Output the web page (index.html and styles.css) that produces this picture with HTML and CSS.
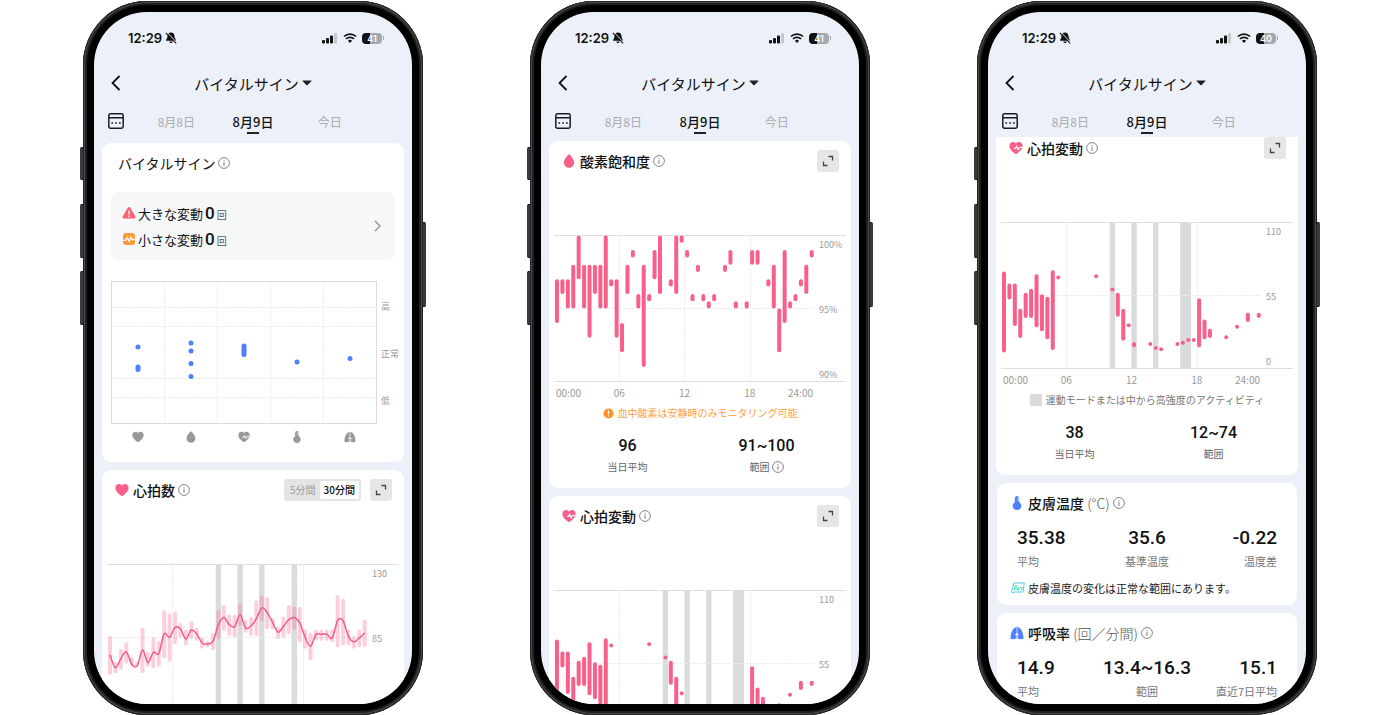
FILE: index.html
```
<!DOCTYPE html>
<html lang="ja">
<head>
    <meta charset="UTF-8">
    <meta name="viewport" content="width=device-width, initial-scale=1.0">
    <title>バイタルサイン</title>
    <link rel="stylesheet" href="styles.css">
</head>
<body>
    <svg class="sprite" aria-hidden="true">
        <symbol id="bell-off" viewBox="0 0 12 12">
            <path d="M6 .5c-2.200 0-3.500 1.600-3.500 3.600 0 2.600-1.500 3.200-1.500 4.700h10c0-1.500-1.500-2.100-1.500-4.700C9.500 2.100 8.200.5 6 .5zM4.300 9.500c.2 1 .9 1.600 1.700 1.600s1.500-.6 1.700-1.600z" fill="#111"/>
            <path d="M1.900.2l10 10.600" stroke="#ecf1f9" stroke-width="1"/>
            <path d="M.8.8l10.400 10.600" stroke="#111" stroke-width="1.100"/>
        </symbol>
        <symbol id="signal" viewBox="0 0 16 11">
            <rect x="0" y="7" width="3" height="3.500" rx="1" fill="#111"/>
            <rect x="4" y="5" width="3" height="5.500" rx="1" fill="#111"/>
            <rect x="8" y="2.500" width="3" height="8" rx="1" fill="#111"/>
            <rect x="12" y="0" width="3" height="10.500" rx="1" fill="#c3c7ce"/>
        </symbol>
        <symbol id="wifi" viewBox="0 0 14 10">
            <path d="M.9 3.500a8.800 8.800 0 0 1 12.200 0M3 5.900a5.800 5.800 0 0 1 8 0" fill="none" stroke="#111" stroke-width="1.700"/>
            <path d="M7 9.900L4.900 7.700a3 3 0 0 1 4.200 0z" fill="#111"/>
        </symbol>
        <symbol id="back" viewBox="0 0 10 16">
            <path d="M8.500 1L1.500 8l7 7" fill="none" stroke="#111" stroke-width="1.800"/>
        </symbol>
        <symbol id="caret" viewBox="0 0 10 6">
            <path d="M1 .5h8c.5 0 .6.4.3.7L5.600 5c-.4.400-.8.400-1.200 0L.7 1.200C.4.900.5.500 1 .5z" fill="#222"/>
        </symbol>
        <symbol id="calendar" viewBox="0 0 16 16">
            <path d="M2.500.8h11c1 0 1.700.7 1.700 1.700v11c0 1-.7 1.700-1.700 1.700h-11c-1 0-1.700-.7-1.700-1.700v-11c0-1 .7-1.700 1.700-1.700zM1 4.800h14" fill="none" stroke="#1c1c1e" stroke-width="1.500"/>
            <path d="M3.400 9.200h1.700v1.600H3.400zM7.200 9.200h1.700v1.600H7.200zM11 9.200h1.700v1.600H11z" fill="#1c1c1e"/>
        </symbol>
        <symbol id="info" viewBox="0 0 12 12">
            <circle cx="6" cy="6" r="5.400" fill="none" stroke="#777" stroke-width=".9"/>
            <path d="M6 5.200v3.600M6 3.200v1.100" stroke="#777" stroke-width="1"/>
        </symbol>
        <symbol id="expand" viewBox="0 0 12 12">
            <path d="M6.500 1.500h4v4M5.500 10.500h-4v-4" fill="none" stroke="#444" stroke-width="1.300"/>
        </symbol>
        <symbol id="chevron" viewBox="0 0 7 12">
            <path d="M1 1l5 5-5 5" fill="none" stroke="#8e8e93" stroke-width="1.300"/>
        </symbol>
        <symbol id="warning" viewBox="0 0 14 14">
            <path d="M5.700 1.700c.6-1 2-1 2.600 0l5 8.800c.6 1-.1 2-1.200 2H1.900c-1.100 0-1.800-1-1.200-2z" fill="#ff5f74"/>
            <path d="M7 4.500v3.800M7 9.500v1.500" stroke="#fff" stroke-width="1.400"/>
        </symbol>
        <symbol id="pulse" viewBox="0 0 14 14">
            <rect x="1" y="1" width="12" height="12" rx="3" fill="#ff9a3c"/>
            <path d="M1.500 8.300h2l1.700-2.600 2 3.500L9 5.200l1.200 2.300h2.500" fill="none" stroke="#fff" stroke-width="1.300"/>
        </symbol>
        <symbol id="alert" viewBox="0 0 12 12">
            <circle cx="6" cy="6" r="5.500" fill="#ff9228"/>
            <path d="M6 2.700v4M6 7.800v1.500" stroke="#fff" stroke-width="1.400"/>
        </symbol>
        <symbol id="heart" viewBox="0 0 14 14">
            <path d="M7 13.200C4.300 11.300.4 8.700.4 4.700.4 2.500 2 .9 4 .9c1.300 0 2.400.6 3 1.600C7.600 1.500 8.700.9 10 .9c2 0 3.600 1.600 3.600 3.800 0 4-3.900 6.600-6.600 8.500z" fill="currentColor"/>
        </symbol>
        <symbol id="heart-pulse" viewBox="0 0 14 14">
            <path d="M7 13.200C4.300 11.300.4 8.700.4 4.700.4 2.500 2 .9 4 .9c1.300 0 2.400.6 3 1.600C7.600 1.500 8.700.9 10 .9c2 0 3.600 1.600 3.600 3.800 0 4-3.900 6.600-6.600 8.500z" fill="currentColor"/>
            <path d="M5 7.400h1.500l1.100-2.200 1.500 3.500 1.300-2.200h3.300" fill="none" stroke="#fff" stroke-width="1.100"/>
        </symbol>
        <symbol id="drop" viewBox="0 0 14 14">
            <path d="M7 .3c.6 0 5.200 5 5.200 8.200A5.200 5.200 0 0 1 7 13.700a5.200 5.200 0 0 1-5.200-5.200C1.800 5.300 6.400.3 7 .3z" fill="currentColor"/>
        </symbol>
        <symbol id="thermo" viewBox="0 0 14 14">
            <path d="M7 0c1.300 0 2.200 1 2.200 2.200v4A4.100 4.100 0 0 1 7 13.900a4.100 4.100 0 0 1-2.200-7.700v-4C4.800 1 5.700 0 7 0z" fill="currentColor"/>
            <path d="M7.300 2h1.900M7.300 4.200h1.900" stroke="#fff" stroke-width="1"/>
        </symbol>
        <symbol id="lungs" viewBox="0 0 14 14">
            <path d="M6.500 1.200v6L5.300 8.500v1l1.200-.8v3.600c-1.400.9-3.500 1-5.100.7-.6-.1-.9-.4-.9-1C.5 8 2.500 1.200 6.500 1.200zM7.500 1.200v6l1.200 1.300v1l-1.200-.8v3.600c1.400.9 3.500 1 5.100.7.6-.1.900-.4.9-1 0-4-2-10.800-6-10.800z" fill="currentColor"/>
            <path d="M7 .4v7" stroke="currentColor" stroke-width=".6"/>
        </symbol>
        <symbol id="note" viewBox="0 0 14 12">
            <path d="M2.800 1h10.500l-1.300 9H3l-1.500 1.300L.8 9.500z" fill="none" stroke="#4fcbe6" stroke-width="1"/>
            <path d="M3.500 8l.7-4.300c2.300-.4 2.300 1.700.2 2.200l1.800 1.900c2.300-.3 2.200-2.500.7-1.900-1.200.8 0 2.700 1.800 1.700M9 5.500h2.200L10.500 8" fill="none" stroke="#3fd9ac" stroke-width="1"/>
        </symbol>
    </svg>

    <main class="phones">
        <section class="phone" aria-label="バイタルサイン">
            <i class="key key-action"></i><i class="key key-up"></i><i class="key key-down"></i><i class="key key-power"></i>
            <div class="screen">
                <div class="status">
                    <span class="time">12:29</span>
                    <svg class="icon-bell"><use href="#bell-off"/></svg>
                    <svg class="icon-signal"><use href="#signal"/></svg>
                    <svg class="icon-wifi"><use href="#wifi"/></svg>
                    <span class="battery">41</span>
                </div>
                <header class="topbar">
                    <button class="plain" aria-label="戻る"><svg class="icon-back"><use href="#back"/></svg></button>
                    <button class="plain page-title">バイタルサイン<svg class="icon-caret"><use href="#caret"/></svg></button>
                </header>
                <nav class="days">
                    <button class="plain" aria-label="カレンダー"><svg class="icon-calendar"><use href="#calendar"/></svg></button>
                    <button class="plain day">8月8日</button>
                    <button class="plain day active">8月9日</button>
                    <button class="plain day">今日</button>
                </nav>
                <div class="feed feed-top">
                    <article class="card">
                        <div class="card-head no-icon">
                            <h2>バイタルサイン</h2>
                            <svg class="icon-info"><use href="#info"/></svg>
                        </div>
                        <a class="summary" href="#vitals">
                            <span class="summary-rows">
                                <span class="summary-row"><svg class="icon"><use href="#warning"/></svg>大きな変動 <b>0</b><small>回</small></span>
                                <span class="summary-row"><svg class="icon"><use href="#pulse"/></svg>小さな変動 <b>0</b><small>回</small></span>
                            </span>
                            <svg class="icon-chevron"><use href="#chevron"/></svg>
                        </a>
                        <div class="vitals" id="vitals">
                            <svg class="vitals-plot" viewBox="0 0 266 143">
                                <g class="grid">
                                    <path d="M0 26.500h266M0 45.500h266M0 97.500h266M0 116.500h266"/>
                                    <path d="M53.500 0v143M106.500 0v143M159.500 0v143M212.500 0v143"/>
                                </g>
                                <rect class="frame" x=".5" y=".5" width="265" height="142"/>
                                <g class="marks">
                                    <path d="M27 66v0M27 86v2.500"/>
                                    <path d="M80 62v0M80 70v0M80 82.500v0M80 95.500v0"/>
                                    <path d="M133 65v8.500"/>
                                    <path d="M186 81v0"/>
                                    <path d="M239 77.500v0"/>
                                </g>
                            </svg>
                            <div class="vitals-levels"><span>高</span><span>正常</span><span>低</span></div>
                            <div class="vitals-icons">
                                <svg><use href="#heart"/></svg>
                                <svg><use href="#drop"/></svg>
                                <svg><use href="#heart-pulse"/></svg>
                                <svg><use href="#thermo"/></svg>
                                <svg><use href="#lungs"/></svg>
                            </div>
                        </div>
                    </article>
                    <article class="card">
                        <div class="card-head">
                            <svg class="icon pink"><use href="#heart"/></svg>
                            <h2>心拍数</h2>
                            <svg class="icon-info"><use href="#info"/></svg>
                            <div class="segmented">
                                <button>5分間</button>
                                <button class="selected">30分間</button>
                            </div>
                            <button class="expand" aria-label="拡大"><svg><use href="#expand"/></svg></button>
                        </div>
                        <div class="chart">
                            <svg class="plot" data-chart="heartRate" viewBox="0 0 292 147"></svg>
                            <div class="y-axis"><span>130</span><span>85</span><span></span></div>
                        </div>
                    </article>
                </div>
            </div>
        </section>

        <section class="phone" aria-label="酸素飽和度">
            <i class="key key-action"></i><i class="key key-up"></i><i class="key key-down"></i><i class="key key-power"></i>
            <div class="screen">
                <div class="status">
                    <span class="time">12:29</span>
                    <svg class="icon-bell"><use href="#bell-off"/></svg>
                    <svg class="icon-signal"><use href="#signal"/></svg>
                    <svg class="icon-wifi"><use href="#wifi"/></svg>
                    <span class="battery">41</span>
                </div>
                <header class="topbar">
                    <button class="plain" aria-label="戻る"><svg class="icon-back"><use href="#back"/></svg></button>
                    <button class="plain page-title">バイタルサイン<svg class="icon-caret"><use href="#caret"/></svg></button>
                </header>
                <nav class="days">
                    <button class="plain" aria-label="カレンダー"><svg class="icon-calendar"><use href="#calendar"/></svg></button>
                    <button class="plain day">8月8日</button>
                    <button class="plain day active">8月9日</button>
                    <button class="plain day">今日</button>
                </nav>
                <div class="feed feed-middle">
                    <article class="card">
                        <div class="card-head">
                            <svg class="icon pink"><use href="#drop"/></svg>
                            <h2>酸素飽和度</h2>
                            <svg class="icon-info"><use href="#info"/></svg>
                            <button class="expand" aria-label="拡大"><svg><use href="#expand"/></svg></button>
                        </div>
                        <div class="chart">
                            <svg class="plot" data-chart="oxygen" viewBox="0 0 292 147"></svg>
                            <div class="y-axis"><span>100%</span><span>95%</span><span>90%</span></div>
                            <div class="x-axis"><span>00:00</span><span>06</span><span>12</span><span>18</span><span>24:00</span></div>
                        </div>
                        <p class="note note-warn"><svg class="icon-alert"><use href="#alert"/></svg>血中酸素は安静時のみモニタリング可能</p>
                        <dl class="pair">
                            <div><dd>96</dd><dt>当日平均</dt></div>
                            <div><dd>91~100</dd><dt>範囲<svg class="icon-info"><use href="#info"/></svg></dt></div>
                        </dl>
                    </article>
                    <article class="card">
                        <div class="card-head">
                            <svg class="icon pink"><use href="#heart-pulse"/></svg>
                            <h2>心拍変動</h2>
                            <svg class="icon-info"><use href="#info"/></svg>
                            <button class="expand" aria-label="拡大"><svg><use href="#expand"/></svg></button>
                        </div>
                        <div class="chart">
                            <svg class="plot" data-chart="hrv" viewBox="0 0 292 147"></svg>
                            <div class="y-axis"><span>110</span><span>55</span><span></span></div>
                        </div>
                    </article>
                </div>
            </div>
        </section>

        <section class="phone" aria-label="心拍変動">
            <i class="key key-action"></i><i class="key key-up"></i><i class="key key-down"></i><i class="key key-power"></i>
            <div class="screen">
                <div class="status">
                    <span class="time">12:29</span>
                    <svg class="icon-bell"><use href="#bell-off"/></svg>
                    <svg class="icon-signal"><use href="#signal"/></svg>
                    <svg class="icon-wifi"><use href="#wifi"/></svg>
                    <span class="battery">40</span>
                </div>
                <header class="topbar">
                    <button class="plain" aria-label="戻る"><svg class="icon-back"><use href="#back"/></svg></button>
                    <button class="plain page-title">バイタルサイン<svg class="icon-caret"><use href="#caret"/></svg></button>
                </header>
                <nav class="days">
                    <button class="plain" aria-label="カレンダー"><svg class="icon-calendar"><use href="#calendar"/></svg></button>
                    <button class="plain day">8月8日</button>
                    <button class="plain day active">8月9日</button>
                    <button class="plain day">今日</button>
                </nav>
                <div class="feed feed-bottom">
                    <article class="card">
                        <div class="card-head">
                            <svg class="icon pink"><use href="#heart-pulse"/></svg>
                            <h2>心拍変動</h2>
                            <svg class="icon-info"><use href="#info"/></svg>
                            <button class="expand" aria-label="拡大"><svg><use href="#expand"/></svg></button>
                        </div>
                        <div class="chart">
                            <svg class="plot" data-chart="hrv" viewBox="0 0 292 147"></svg>
                            <div class="y-axis"><span>110</span><span>55</span><span>0</span></div>
                            <div class="x-axis"><span>00:00</span><span>06</span><span>12</span><span>18</span><span>24:00</span></div>
                        </div>
                        <p class="note"><i class="swatch"></i>運動モードまたは中から高強度のアクティビティ</p>
                        <dl class="pair">
                            <div><dd>38</dd><dt>当日平均</dt></div>
                            <div><dd>12~74</dd><dt>範囲</dt></div>
                        </dl>
                    </article>
                    <article class="card card-compact">
                        <div class="card-head">
                            <svg class="icon blue"><use href="#thermo"/></svg>
                            <h2>皮膚温度 <small>(°C)</small></h2>
                            <svg class="icon-info"><use href="#info"/></svg>
                        </div>
                        <dl class="triple">
                            <div><dd>35.38</dd><dt>平均</dt></div>
                            <div><dd>35.6</dd><dt>基準温度</dt></div>
                            <div><dd>-0.22</dd><dt>温度差</dt></div>
                        </dl>
                        <p class="advice"><svg class="icon-note"><use href="#note"/></svg>皮膚温度の変化は正常な範囲にあります。</p>
                    </article>
                    <article class="card card-compact">
                        <div class="card-head">
                            <svg class="icon blue"><use href="#lungs"/></svg>
                            <h2>呼吸率 <small>(回／分間)</small></h2>
                            <svg class="icon-info"><use href="#info"/></svg>
                        </div>
                        <dl class="triple">
                            <div><dd>14.9</dd><dt>平均</dt></div>
                            <div><dd>13.4~16.3</dd><dt>範囲</dt></div>
                            <div><dd>15.1</dd><dt>直近7日平均</dt></div>
                        </dl>
                    </article>
                </div>
            </div>
        </section>
    </main>
    <script src="charts.js"></script>
</body>
</html>
```

FILE: styles.css
```
* {
    box-sizing: border-box;
}

body {
    margin: 0;
    background-color: #fff;
    color: #111;
    font-family: "Noto Sans CJK JP", "Noto Sans", sans-serif;
}

h2, p, dl, dd, dt {
    margin: 0;
}

button {
    font-family: inherit;
    color: inherit;
    cursor: pointer;
}

svg {
    display: block;
    flex-shrink: 0;
}

.sprite {
    display: none;
}

.phones {
    display: flex;
    justify-content: center;
    gap: 107px;
    padding-top: 1px;
}

/* device frame */
.phone {
    position: relative;
    flex: 0 1 340px;
    aspect-ratio: 340 / 714;
    padding: 11px;
    border-radius: 64px;
    background-color: #000;
    box-shadow: inset 0 0 0 1px #222423, inset 0 0 0 2px #4a4c4c, inset 0 0 0 4px #1f2120;
}

.key {
    position: absolute;
    left: -3px;
    width: 3px;
    border-radius: 2px 0 0 2px;
    background-color: #3a3c3b;
    border-top: 1px solid #111;
    border-bottom: 1px solid #111;
}

.key-action {
    top: 146px;
    height: 33px;
}

.key-up {
    top: 203px;
    height: 54px;
}

.key-down {
    top: 270px;
    height: 54px;
}

.key-power {
    left: auto;
    right: -3px;
    top: 221px;
    height: 85px;
    border-radius: 0 2px 2px 0;
}

.screen {
    display: flex;
    flex-direction: column;
    height: 100%;
    border-radius: 53px;
    overflow: hidden;
    background-color: #ecf1f9;
}

/* status bar and header */
.status {
    display: flex;
    align-items: center;
    flex: 0 0 52px;
    padding: 0 30px 0 34px;
}

.time {
    font-family: Inter, sans-serif;
    font-size: 13px;
    font-weight: 600;
}

.icon-bell {
    width: 12px;
    height: 12px;
    margin-left: 3px;
}

.icon-signal {
    width: 16px;
    height: 11px;
    margin-left: auto;
}

.icon-wifi {
    width: 14px;
    height: 10px;
    margin: 0 5px;
}

.battery {
    display: flex;
    align-items: center;
    justify-content: center;
    position: relative;
    width: 20px;
    height: 11px;
    border-radius: 4px;
    background: linear-gradient(to right, #111 42%, #a5a8ae 42%);
    color: #fff;
    font-family: Inter, sans-serif;
    font-size: 9px;
    font-weight: 600;
}

.battery::after {
    content: "";
    position: absolute;
    right: -2px;
    width: 1px;
    height: 4px;
    background-color: #a5a8ae;
}

.plain {
    display: flex;
    align-items: center;
    justify-content: center;
    padding: 0;
    border: none;
    background: none;
}

.topbar {
    display: grid;
    grid-template-columns: 44px 1fr 44px;
    flex: 0 0 40px;
    padding-bottom: 2px;
}

.icon-back {
    width: 10px;
    height: 16px;
}

.page-title {
    gap: 3px;
    font-size: 15px;
}

.icon-caret {
    width: 10px;
    height: 6px;
}

.days {
    display: grid;
    grid-template-columns: 44px 1fr 1fr 1fr 44px;
    flex: 0 0 33px;
}

.icon-calendar {
    width: 16px;
    height: 16px;
}

.day {
    flex-direction: column;
    padding-top: 4px;
    font-size: 12px;
    line-height: 20px;
    color: #a9abb0;
}

.day.active {
    font-size: 13px;
    font-weight: 500;
    color: #111;
}

.day::after {
    content: "";
    width: 12px;
    height: 2px;
}

.day.active::after {
    background-color: #222;
}

/* cards */
.feed {
    display: flex;
    flex-direction: column;
    gap: 8px;
    flex: 1;
    min-height: 0;
    padding: 0 8px;
    overflow: hidden;
}

.feed-top {
    padding-top: 6px;
}

.feed-middle {
    padding-top: 4px;
}

.feed-bottom .card:first-child {
    margin-top: -9px;
}

.card {
    flex-shrink: 0;
    padding-top: 9px;
    border-radius: 9px;
    background-color: #fff;
}

.card-compact {
    margin: 0 1px;
}

.card-compact:last-child {
    padding-bottom: 20px;
}

.card-head {
    display: flex;
    align-items: center;
    gap: 3px;
    height: 22px;
    padding: 0 12px 0 13px;
}

.card-head.no-icon {
    padding-left: 16px;
}

.card-head h2 {
    font-size: 14px;
    line-height: 22px;
    font-weight: 500;
}

.card-head.no-icon h2 {
    font-weight: 400;
}

.card-head h2 small {
    font-size: 14px;
    font-weight: 300;
    color: #555;
}

.icon {
    width: 14px;
    height: 14px;
}

.card-head .icon {
    margin-right: 1px;
}

.icon-info {
    width: 12px;
    height: 12px;
}

.pink {
    color: #f8608a;
}

.blue {
    color: #4e80ff;
}

.expand {
    display: flex;
    align-items: center;
    justify-content: center;
    width: 22px;
    height: 22px;
    margin-left: auto;
    padding: 0;
    border: none;
    border-radius: 3px;
    background-color: #e6e6e6;
}

.expand svg {
    width: 12px;
    height: 12px;
}

.segmented {
    display: flex;
    height: 22px;
    margin-left: auto;
    padding: 2px;
    border-radius: 3px;
    background-color: #e4e4e4;
}

.segmented button {
    padding: 0 4px;
    border: none;
    border-radius: 2px;
    background: none;
    font-size: 10px;
    line-height: 18px;
    color: #999;
}

.segmented .selected {
    background-color: #fff;
    color: #111;
    font-weight: 500;
}

.segmented + .expand {
    margin-left: 6px;
}

/* vital signs overview */
.summary {
    display: flex;
    align-items: center;
    justify-content: space-between;
    margin: 18px 9px 21px;
    padding: 8px 14px 8px 11px;
    border-radius: 8px;
    background-color: #f6f7f9;
    color: inherit;
    text-decoration: none;
}

.summary-row {
    display: flex;
    align-items: center;
    gap: 2px;
    height: 26px;
    font-size: 13px;
}

.summary-row b {
    font-family: Roboto, sans-serif;
    font-size: 17px;
    font-weight: 500;
}

.summary-row small {
    padding-top: 3px;
    font-size: 10px;
    color: #555;
}

.icon-chevron {
    width: 7px;
    height: 12px;
}

.vitals {
    display: grid;
    grid-template-columns: 1fr 18px;
    column-gap: 4px;
    row-gap: 7px;
    padding: 0 5px 19px 9px;
}

.vitals-plot {
    width: 100%;
}

.vitals-plot .frame {
    fill: none;
    stroke: #dcdcdc;
}

.vitals-plot .marks path {
    stroke: #4e80ff;
    stroke-width: 5;
    stroke-linecap: round;
}

.vitals-levels {
    display: flex;
    flex-direction: column;
    justify-content: space-around;
    padding-top: 2px;
    font-size: 9px;
    line-height: 14px;
    color: #999;
    white-space: nowrap;
}

.vitals-icons {
    display: grid;
    grid-template-columns: repeat(5, 1fr);
    justify-items: center;
    color: #999;
}

.vitals-icons svg {
    width: 12px;
    height: 12px;
}

/* time charts */
.chart {
    display: grid;
    grid-template-columns: 1fr 27px;
    margin: 63px 5px 0;
}

.plot {
    grid-area: 1 / 1 / 2 / 3;
    width: 100%;
}

.grid path {
    fill: none;
    stroke: #ececec;
    stroke-dasharray: 2 1;
}

.rule {
    stroke: #dedede;
}

.band {
    fill: #dadbdc;
}

.bar {
    fill: #f8608a;
}

.bar.soft {
    fill-opacity: .3;
}

.line {
    fill: none;
    stroke: #f25c88;
    stroke-width: 1.5;
    stroke-linejoin: round;
}

.y-axis {
    grid-area: 1 / 2;
    display: flex;
    flex-direction: column;
    justify-content: space-between;
    padding-top: 3px;
    font-size: 9px;
    line-height: 14px;
    color: #999;
}

.y-axis span {
    min-height: 14px;
}

.x-axis {
    grid-area: 2 / 1;
    display: grid;
    grid-template-columns: 1fr 2fr 2fr 2fr 1fr;
    margin-right: 4px;
    padding-top: 3px;
    font-size: 10px;
    line-height: 16px;
    text-align: center;
    color: #999;
}

.x-axis span:last-child {
    justify-self: end;
    padding-right: 2px;
}

.x-axis span:first-child {
    justify-self: start;
    padding-left: 2px;
}

.note {
    display: flex;
    align-items: center;
    justify-content: center;
    gap: 4px;
    margin-top: 4px;
    font-size: 10px;
    line-height: 16px;
    color: #777;
}

.note-warn {
    color: #ff9f45;
}

.icon-alert {
    width: 11px;
    height: 11px;
}

.swatch {
    width: 12px;
    height: 12px;
    background-color: #dadbdc;
}

/* figures */
.pair {
    display: grid;
    grid-template-columns: 1fr 1fr;
    padding: 15px 15px 13px 9px;
    text-align: center;
}

.pair div, .triple div {
    display: flex;
    flex-direction: column;
}

.pair dd {
    font-family: Roboto, sans-serif;
    font-size: 16px;
    font-weight: 500;
    line-height: 20px;
}

.pair dt {
    display: flex;
    align-items: center;
    justify-content: center;
    gap: 2px;
    padding-top: 3px;
    font-size: 10px;
    line-height: 16px;
    color: #666;
}

.triple {
    display: grid;
    grid-template-columns: 1fr 1fr 1fr;
    padding: 12px 20px 0;
    text-align: center;
    white-space: nowrap;
}

.triple div:first-child {
    align-items: flex-start;
}

.triple div:last-child {
    align-items: flex-end;
}

.triple dd {
    font-family: Roboto, sans-serif;
    font-size: 19px;
    font-weight: 500;
    line-height: 24px;
}

.triple dt {
    padding-top: 3px;
    font-size: 11px;
    line-height: 16px;
    color: #777;
}

.advice {
    display: flex;
    align-items: center;
    gap: 3px;
    padding: 11px 14px 9px;
    font-size: 11px;
    line-height: 16px;
    color: #222;
}

.icon-note {
    width: 14px;
    height: 12px;
}
```

FILE: charts.js
```
const SVG_NS = 'http://www.w3.org/2000/svg';
const HEIGHT = 146;
const STEP = 5.42; // one half-hour slot

// bars: [slot, high, low]; bands: [first slot, last slot]
const charts = {
    heartRate: {
        max: 130, min: 40, soft: true,
        bands: [[20, 20], [24, 24], [28, 28], [34, 34]],
        bars: [
            [0, 86, 62], [1, 70, 63], [2, 78, 65], [3, 82, 69], [4, 73, 67], [5, 70, 67],
            [6, 91, 63], [7, 76, 67], [8, 85, 66], [9, 83, 67], [10, 102, 72], [11, 100, 70],
            [12, 101, 81], [13, 94, 85], [14, 90, 80], [15, 95, 84], [16, 91, 83], [17, 85, 78],
            [18, 83, 79], [19, 88, 77], [20, 102, 84], [21, 105, 89], [22, 99, 86], [23, 99, 85],
            [24, 106, 92], [25, 96, 88], [26, 98, 86], [27, 108, 86], [28, 111, 95], [29, 110, 90],
            [30, 97, 90], [31, 92, 84], [32, 98, 85], [33, 105, 87], [34, 104, 90], [35, 104, 82],
            [36, 90, 78], [37, 88, 71], [38, 90, 83], [39, 90, 83], [40, 90, 83], [41, 90, 82],
            [42, 111, 79], [43, 109, 80], [44, 90, 80], [45, 86, 78], [46, 90, 79], [47, 96, 79]
        ],
        line: [
            74, 66, 71.7, 75.8, 68.4, 67.2, 77, 69.2, 75.6, 74.8, 87, 84.8, 91, 90, 83.8, 89.3,
            86.9, 81.3, 80.7, 82.4, 92.6, 97, 92.6, 91.4, 98.8, 90.6, 91.8, 96.3, 103, 100, 94, 88,
            91.6, 95.7, 97, 93.7, 84.8, 79.3, 86.5, 86.7, 86.7, 84.4, 95.3, 95, 85.4, 82, 84.4, 87.5
        ]
    },
    oxygen: {
        max: 100, min: 90,
        bands: [],
        bars: [
            [0, 97, 94], [1, 97, 96], [2, 97, 95], [3, 98, 95], [4, 100, 97], [5, 98, 95],
            [6, 98, 93], [7, 98, 96], [8, 98, 95], [9, 100, 95], [10, 97, 96.5], [11, 97, 93],
            [12, 94, 92], [13, 98, 96], [14, 99, 98.5], [15, 96, 95], [16, 98, 91], [17, 96, 95.5],
            [18, 99, 97], [19, 100, 96], [21, 97, 96.5], [22, 100, 96], [23, 100, 99.5],
            [24, 99, 98.5], [25, 96, 95.5], [26, 98, 97.5], [27, 96, 95.5], [28, 95.5, 95],
            [29, 96, 95.5], [31, 98, 97.5], [32, 99, 98], [33, 95.5, 95], [35, 95.5, 95],
            [36, 99, 98], [37, 99, 98], [39, 97, 96.5], [40, 98, 95], [41, 95, 92], [42, 99, 94],
            [43, 95.5, 95], [44, 96, 95.5], [45, 97, 96.5], [46, 98, 96], [47, 99, 98.5]
        ]
    },
    hrv: {
        max: 110, min: 0,
        bands: [[20, 20], [24, 24], [28, 28], [33, 34]],
        bars: [
            [0, 73, 12], [1, 64, 52], [2, 64, 32], [3, 45, 23], [4, 57, 38], [5, 60, 38],
            [6, 71, 31], [7, 56, 28], [8, 54, 22], [9, 74, 14], [10, 70, 67], [17, 71, 68],
            [20, 61, 58], [21, 57, 39], [22, 45, 21], [23, 34, 31], [24, 20, 16], [27, 20, 17],
            [28, 17, 14], [29, 16, 13], [32, 20, 17], [33, 21, 18], [34, 23, 20], [35, 23, 20],
            [36, 53, 16], [37, 37, 22], [38, 30, 23], [41, 25, 22], [43, 33, 30], [45, 42, 35],
            [47, 42, 38]
        ]
    }
};

function add(parent, name, attrs) {
    const el = document.createElementNS(SVG_NS, name);
    for (const key in attrs) {
        el.setAttribute(key, attrs[key]);
    }
    parent.appendChild(el);
    return el;
}

function slotX(slot) {
    return 3 + slot * STEP;
}

function smoothPath(points) {
    let d = 'M' + points[0].join(' ');
    for (let i = 0; i < points.length - 1; i++) {
        const p0 = points[i - 1] || points[i];
        const p1 = points[i];
        const p2 = points[i + 1];
        const p3 = points[i + 2] || p2;
        d += 'C' + [
            p1[0] + (p2[0] - p0[0]) / 6, p1[1] + (p2[1] - p0[1]) / 6,
            p2[0] - (p3[0] - p1[0]) / 6, p2[1] - (p3[1] - p1[1]) / 6,
            p2[0], p2[1]
        ].join(' ');
    }
    return d;
}

function drawChart(svg) {
    const chart = charts[svg.dataset.chart];
    const y = value => (chart.max - value) / (chart.max - chart.min) * HEIGHT;

    chart.bands.forEach(([from, to]) => {
        add(svg, 'rect', {
            class: 'band', x: slotX(from) - STEP / 2, y: 0,
            width: (to - from + 1) * STEP, height: HEIGHT
        });
    });

    const grid = add(svg, 'g', { class: 'grid' });
    add(grid, 'path', { d: 'M65.5 0V146M130.5 0V146M196.5 0V146M0 73.5H261' });
    add(svg, 'path', { class: 'rule', d: 'M0 .5H292M0 146.5H292' });

    chart.bars.forEach(([slot, high, low]) => {
        add(svg, 'rect', {
            class: chart.soft ? 'bar soft' : 'bar',
            x: slotX(slot) - 2, y: y(high) + 0.5, rx: 2,
            width: 4, height: Math.max(4, y(low) - y(high))
        });
    });

    if (chart.line) {
        add(svg, 'path', { class: 'line', d: smoothPath(chart.line.map((v, i) => [slotX(i), y(v)])) });
    }
}

document.querySelectorAll('.plot').forEach(drawChart);
```
